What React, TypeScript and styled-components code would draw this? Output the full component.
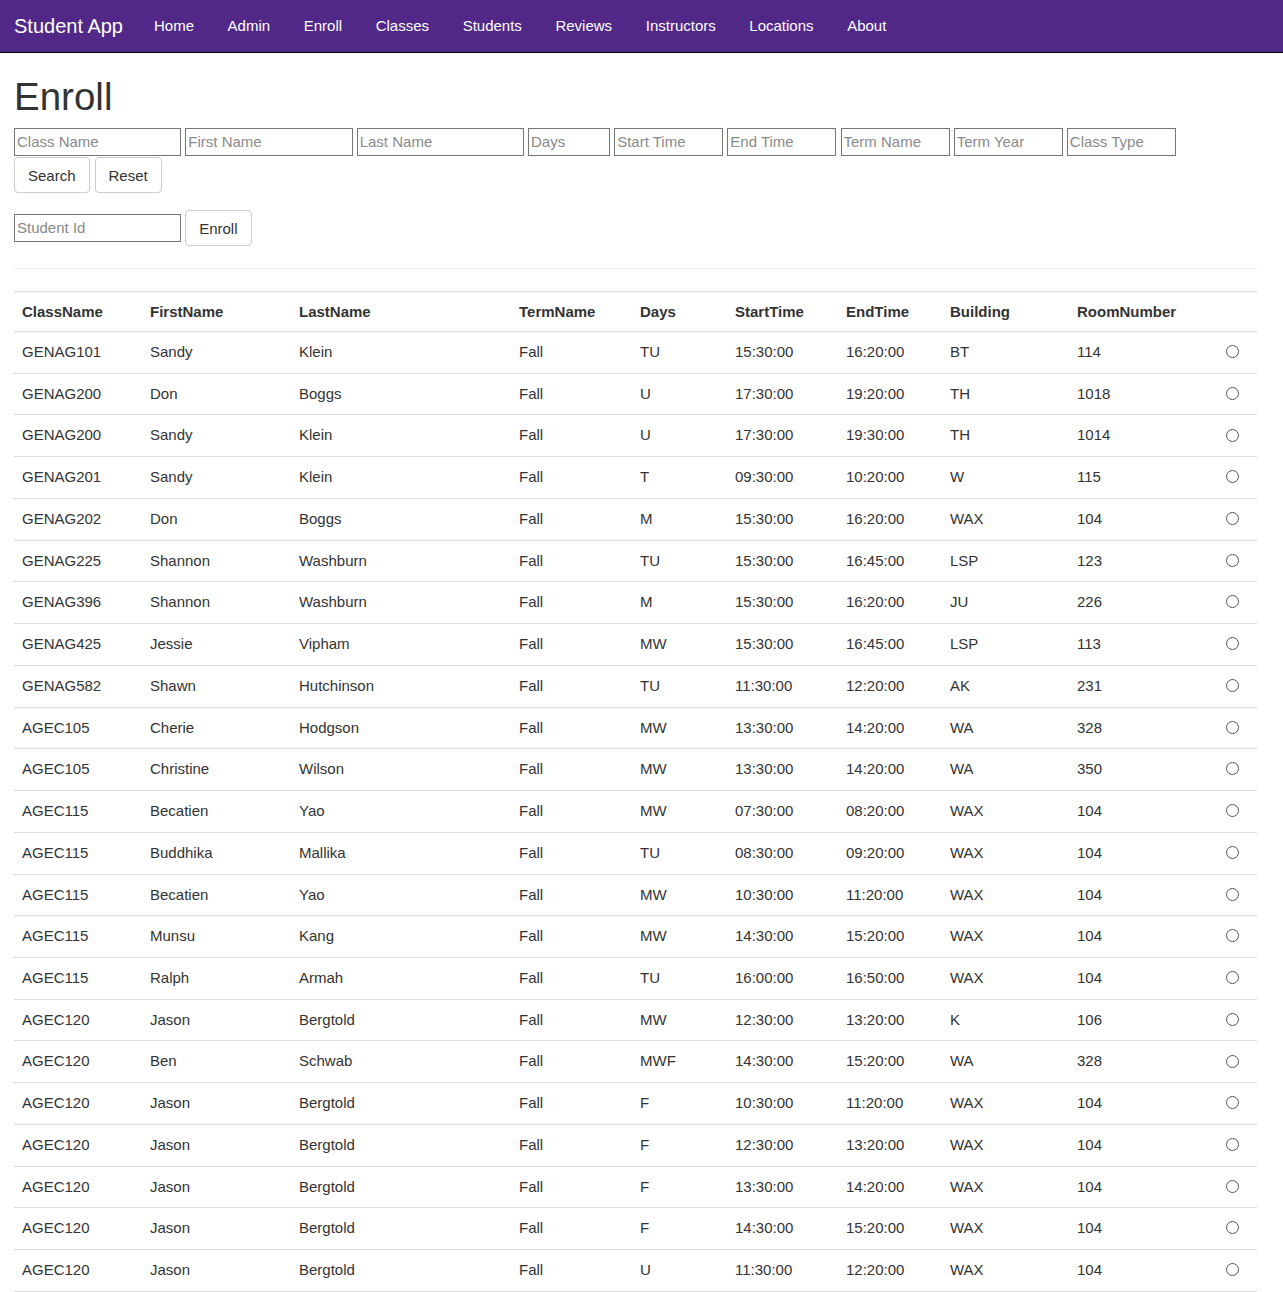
import React from "react";
import styled, { createGlobalStyle } from "styled-components";

const GlobalStyle = createGlobalStyle`
  body {
    margin: 0;
    font-family: "Liberation Sans", Arial, sans-serif;
    font-size: 15px;
    color: #333;
    background: #fff;
  }
`;

type Row = [string, string, string, string, string, string, string, string, string];

const rows: Row[] = [
  ["GENAG101", "Sandy", "Klein", "Fall", "TU", "15:30:00", "16:20:00", "BT", "114"],
  ["GENAG200", "Don", "Boggs", "Fall", "U", "17:30:00", "19:20:00", "TH", "1018"],
  ["GENAG200", "Sandy", "Klein", "Fall", "U", "17:30:00", "19:30:00", "TH", "1014"],
  ["GENAG201", "Sandy", "Klein", "Fall", "T", "09:30:00", "10:20:00", "W", "115"],
  ["GENAG202", "Don", "Boggs", "Fall", "M", "15:30:00", "16:20:00", "WAX", "104"],
  ["GENAG225", "Shannon", "Washburn", "Fall", "TU", "15:30:00", "16:45:00", "LSP", "123"],
  ["GENAG396", "Shannon", "Washburn", "Fall", "M", "15:30:00", "16:20:00", "JU", "226"],
  ["GENAG425", "Jessie", "Vipham", "Fall", "MW", "15:30:00", "16:45:00", "LSP", "113"],
  ["GENAG582", "Shawn", "Hutchinson", "Fall", "TU", "11:30:00", "12:20:00", "AK", "231"],
  ["AGEC105", "Cherie", "Hodgson", "Fall", "MW", "13:30:00", "14:20:00", "WA", "328"],
  ["AGEC105", "Christine", "Wilson", "Fall", "MW", "13:30:00", "14:20:00", "WA", "350"],
  ["AGEC115", "Becatien", "Yao", "Fall", "MW", "07:30:00", "08:20:00", "WAX", "104"],
  ["AGEC115", "Buddhika", "Mallika", "Fall", "TU", "08:30:00", "09:20:00", "WAX", "104"],
  ["AGEC115", "Becatien", "Yao", "Fall", "MW", "10:30:00", "11:20:00", "WAX", "104"],
  ["AGEC115", "Munsu", "Kang", "Fall", "MW", "14:30:00", "15:20:00", "WAX", "104"],
  ["AGEC115", "Ralph", "Armah", "Fall", "TU", "16:00:00", "16:50:00", "WAX", "104"],
  ["AGEC120", "Jason", "Bergtold", "Fall", "MW", "12:30:00", "13:20:00", "K", "106"],
  ["AGEC120", "Ben", "Schwab", "Fall", "MWF", "14:30:00", "15:20:00", "WA", "328"],
  ["AGEC120", "Jason", "Bergtold", "Fall", "F", "10:30:00", "11:20:00", "WAX", "104"],
  ["AGEC120", "Jason", "Bergtold", "Fall", "F", "12:30:00", "13:20:00", "WAX", "104"],
  ["AGEC120", "Jason", "Bergtold", "Fall", "F", "13:30:00", "14:20:00", "WAX", "104"],
  ["AGEC120", "Jason", "Bergtold", "Fall", "F", "14:30:00", "15:20:00", "WAX", "104"],
  ["AGEC120", "Jason", "Bergtold", "Fall", "U", "11:30:00", "12:20:00", "WAX", "104"],
];

const headers = ["ClassName", "FirstName", "LastName", "TermName", "Days", "StartTime", "EndTime", "Building", "RoomNumber", ""];
const colWidths = [128, 149, 220, 121, 95, 111, 104, 127, 149, 39];

const navItems = ["Home", "Admin", "Enroll", "Classes", "Students", "Reviews", "Instructors", "Locations", "About"];

const searchFields: { label: string; width: number }[] = [
  { label: "Class Name", width: 167.2 },
  { label: "First Name", width: 167.2 },
  { label: "Last Name", width: 167.2 },
  { label: "Days", width: 82 },
  { label: "Start Time", width: 109 },
  { label: "End Time", width: 109 },
  { label: "Term Name", width: 109 },
  { label: "Term Year", width: 109 },
  { label: "Class Type", width: 109 },
];

export default function App() {
  return (
    <>
      <GlobalStyle />
      <Navbar>
        <Brand href="#">Student App</Brand>
        <NavList>
          {navItems.map((item) => (
            <NavLink key={item} href="#">
              {item}
            </NavLink>
          ))}
        </NavList>
      </Navbar>
      <Container>
        <Title>Enroll</Title>
        <InputRow>
          {searchFields.map((f) => (
            <TextInput key={f.label} placeholder={f.label} $width={f.width} />
          ))}
        </InputRow>
        <ButtonRow>
          <Button>Search</Button>
          <Button>Reset</Button>
        </ButtonRow>
        <EnrollRow>
          <TextInput placeholder="Student Id" $width={167.2} />
          <Button>Enroll</Button>
        </EnrollRow>
        <Divider />
        <Table>
          <colgroup>
            {colWidths.map((w, i) => (
              <col key={i} style={{ width: w }} />
            ))}
          </colgroup>
          <thead>
            <tr>
              {headers.map((h, i) => (
                <Th key={i}>{h}</Th>
              ))}
            </tr>
          </thead>
          <tbody>
            {rows.map((r, i) => (
              <tr key={i}>
                {r.map((c, j) => (
                  <Td key={j}>{c}</Td>
                ))}
                <Td>
                  <Radio type="radio" name="enroll" />
                </Td>
              </tr>
            ))}
          </tbody>
        </Table>
      </Container>
    </>
  );
}

const Navbar = styled.nav`
  display: flex;
  align-items: center;
  height: 52px;
  background-color: #512888;
  border-bottom: 1px solid #000;
`;

const Brand = styled.a`
  padding: 0 15px 0 14px;
  font-size: 20px;
  color: #fff;
  text-decoration: none;
  line-height: 50px;
`;

const NavList = styled.div`
  display: flex;
  align-items: center;
`;

const NavLink = styled.a`
  padding: 0 16.8px;
  font-size: 15px;
  color: #fff;
  text-decoration: none;
  line-height: 50px;

  &:first-child {
    padding-left: 16px;
  }
`;

const Container = styled.main`
  padding: 0 26px 40px 14px;
`;

const Title = styled.h1`
  margin: 23px 0 10px;
  font-size: 38.5px;
  line-height: 42px;
  font-weight: 500;
  color: #333;
`;

const InputRow = styled.div`
  display: flex;
  gap: 4.17px;
`;

const TextInput = styled.input<{ $width: number }>`
  box-sizing: border-box;
  width: ${(p) => p.$width}px;
  height: 28px;
  padding: 0 2px 1px;
  border: 1px solid #767676;
  border-radius: 0;
  font-family: "Liberation Sans", Arial, sans-serif;
  font-size: 15px;
  color: #333;

  &::placeholder {
    color: #8a8a8a;
  }
`;

const ButtonRow = styled.div`
  display: flex;
  gap: 5px;
  margin-top: 1px;
`;

const EnrollRow = styled.div`
  display: flex;
  align-items: center;
  gap: 4px;
  margin-top: 17px;
`;

const Button = styled.button`
  box-sizing: border-box;
  height: 36px;
  padding: 6px 13px;
  background: #fff;
  border: 1px solid #ccc;
  border-radius: 4px;
  font-family: "Liberation Sans", Arial, sans-serif;
  font-size: 15px;
  line-height: 21px;
  color: #333;
`;

const Divider = styled.hr`
  margin: 22px 0 22px;
  border: 0;
  border-top: 1px solid #eee;
`;

const Table = styled.table`
  width: 100%;
  table-layout: fixed;
  border-collapse: collapse;
  font-size: 15px;
`;

const Th = styled.th`
  padding: 10px 8px 9px;
  line-height: 20px;
  text-align: left;
  font-weight: bold;
  border-top: 1px solid #ddd;
  border-bottom: 1px solid #ddd;
`;

const Td = styled.td`
  padding: 10px 8px;
  line-height: 20.74px;
  text-align: left;
  border-bottom: 1px solid #ddd;
  white-space: nowrap;
`;

const Radio = styled.input`
  appearance: none;
  box-sizing: border-box;
  display: inline-block;
  margin: -3px 0 0 0;
  width: 13px;
  height: 13px;
  border: 1px solid #555;
  border-radius: 50%;
  background: #fff;
  vertical-align: middle;
`;
